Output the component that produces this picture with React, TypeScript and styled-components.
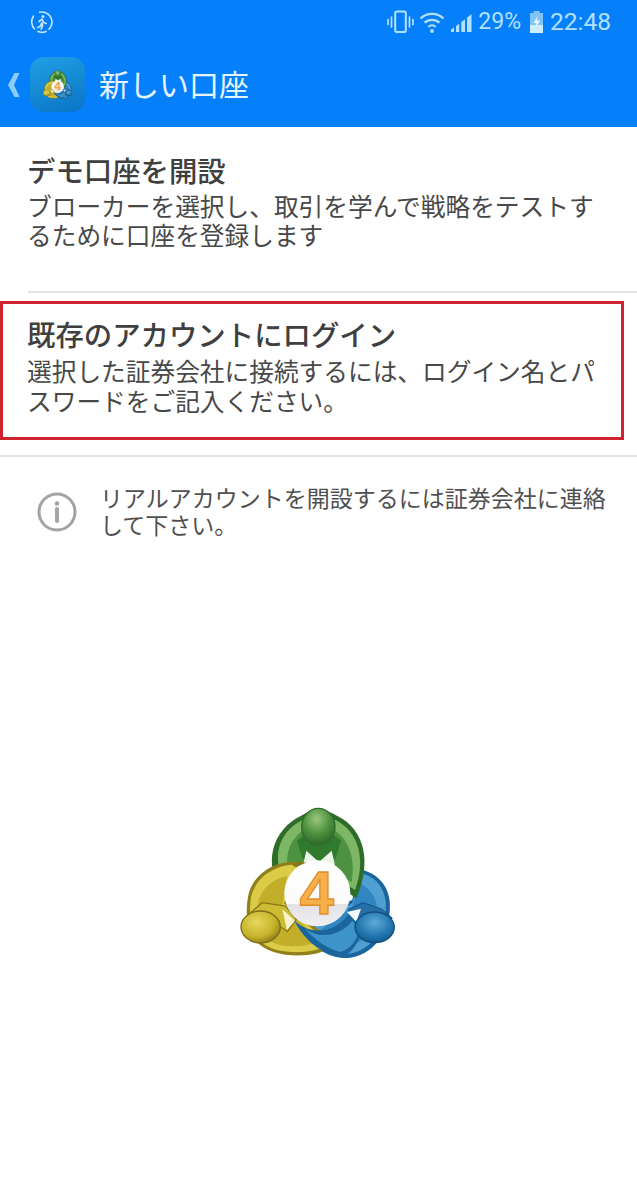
import React from "react";
import styled, { createGlobalStyle } from "styled-components";

const Global = createGlobalStyle`
  html, body { margin: 0; padding: 0; background: #fff; }
  body { font-family: "Noto Sans CJK JP", "Noto Sans", sans-serif; }
`;

const Page = styled.div`
  width: 637px;
  height: 1200px;
  overflow: hidden;
  background: #fff;
  display: flex;
  flex-direction: column;
`;

const Header = styled.header`
  background: #067ffb;
  height: 127px;
  display: flex;
  flex-direction: column;
`;

const StatusBar = styled.div`
  height: 44px;
  display: flex;
  align-items: center;
  padding: 0 26px 0 30px;
  color: #b4e1ff;
  font-family: Roboto, "Liberation Sans", sans-serif;
`;

const StatusLeft = styled.div`
  flex: 1;
  display: flex;
  align-items: center;
`;

const StatusText = styled.span<{ $ml: number; $size: number }>`
  font-size: ${(p) => p.$size}px;
  line-height: 44px;
  margin-left: ${(p) => p.$ml}px;
`;

const IconSlot = styled.svg<{ $ml?: number }>`
  display: block;
  flex: none;
  margin-left: ${(p) => p.$ml ?? 0}px;
`;

const AppBar = styled.div`
  flex: 1;
  display: flex;
  align-items: center;
  padding: 0 0 2px 7px;
`;

const BackChevron = styled.svg`
  display: block;
  flex: none;
`;

const AppIcon = styled.div`
  width: 55px;
  height: 55px;
  margin-left: 10px;
  border-radius: 14px;
  background: linear-gradient(160deg, #20a0e4 0%, #0a74c6 100%);
  display: flex;
  align-items: center;
  justify-content: center;
`;

const AppTitle = styled.h1`
  margin: 0 0 4px 14px;
  font-size: 30px;
  line-height: 40px;
  font-weight: 400;
  color: #e4f5ff;
`;

const Section = styled.section`
  padding: 25px 37px 42px 27px;
`;

const Divider = styled.div<{ $inset: number }>`
  height: 2px;
  margin-left: ${(p) => p.$inset}px;
  background: #e4e4e4;
`;

const Highlight = styled.section`
  margin: 8px 13px 15px 0;
  height: 139px;
  box-sizing: border-box;
  border: 3.5px solid #cf2430;
  padding: 12px 20px 0 24px;
`;

const Title = styled.h2`
  margin: 0 0 3px;
  font-size: 28.4px;
  line-height: 36px;
  font-weight: 500;
  color: #3f3f3f;
`;

const Body = styled.p<{ $lh: number }>`
  margin: 0;
  font-size: 24.7px;
  line-height: ${(p) => p.$lh}px;
  color: #484848;
`;

const InfoRow = styled.div`
  display: flex;
  align-items: flex-start;
  padding: 27px 28px 0 37px;
`;

const InfoIcon = styled.svg`
  flex: none;
  display: block;
  margin: 8px 23px 0 0;
`;

const InfoText = styled.p`
  margin: 0;
  font-size: 23px;
  line-height: 27px;
  color: #505050;
`;

const LogoArea = styled.div`
  display: flex;
  justify-content: center;
  padding: 252px 0 0 0;
`;

function Mark({ size, id }: { size: number; id: string }) {
  return (
    <svg width={size} height={(size * 540) / 600} viewBox="0 0 600 540" style={{ display: "block" }}>
      <defs>
        <radialGradient id={`${id}g`} cx="45%" cy="30%" r="70%">
          <stop offset="0%" stopColor="#9cc77f" />
          <stop offset="55%" stopColor="#4f9340" />
          <stop offset="100%" stopColor="#2c6a29" />
        </radialGradient>
        <radialGradient id={`${id}y`} cx="40%" cy="35%" r="70%">
          <stop offset="0%" stopColor="#e6d85c" />
          <stop offset="65%" stopColor="#c7b32a" />
          <stop offset="100%" stopColor="#8a7a16" />
        </radialGradient>
        <radialGradient id={`${id}b`} cx="50%" cy="35%" r="70%">
          <stop offset="0%" stopColor="#5fa9d6" />
          <stop offset="65%" stopColor="#1f74ad" />
          <stop offset="100%" stopColor="#125286" />
        </radialGradient>
        <linearGradient id={`${id}c`} x1="0" y1="0" x2="0" y2="1">
          <stop offset="0%" stopColor="#ffffff" />
          <stop offset="66%" stopColor="#fcfcfc" />
          <stop offset="67%" stopColor="#e2e2e6" />
          <stop offset="100%" stopColor="#f0f0f2" />
        </linearGradient>
      </defs>

      {/* blue figure: ring behind the others */}
      <path d="M415 238C482 245 520 300 512 365C505 450 440 507 372 504C310 500 255 450 225 390L400 330Z" fill="#1a659e" />
      <path d="M425 250C482 262 506 312 500 365C492 442 434 494 372 492C330 490 290 462 262 425L400 340Z" fill="#4f9fd3" />
      <path d="M420 280C458 296 478 332 474 372C464 432 420 470 372 468C340 466 310 450 290 430L400 350Z" fill="#2f86c0" />

      {/* green figure */}
      <path d="M178 285C138 215 160 120 245 78C280 55 320 55 355 78C440 120 458 220 412 325L330 270L240 240Z" fill="#2e6c2a" />
      <path d="M188 255C160 190 186 122 250 90L350 90C420 126 442 210 408 300L330 250L240 225Z" fill="#7db766" />
      <path d="M208 240C196 190 216 146 252 122L348 122C392 152 410 210 398 276L330 240L240 225Z" fill="#4c9240" />
      <path d="M234 152L262 130L338 130L366 152L350 205L300 232L250 205Z" fill="#2f7a2c" />
      <path d="M262 182L300 216L338 182L348 226L252 226Z" fill="#eef5e8" />
      <ellipse cx="298" cy="110" rx="50" ry="55" fill={`url(#${id}g)`} stroke="#2e6c2a" strokeWidth="4" />

      {/* yellow figure */}
      <path d="M245 216C170 208 100 250 87 320C78 372 84 420 110 452C140 486 190 498 250 496C292 494 322 484 348 462L300 420L205 345Z" fill="#8f801a" />
      <path d="M240 224C176 220 110 258 96 322C88 372 96 424 124 454C156 484 205 488 250 486C285 484 312 476 334 460L290 425L195 340Z" fill="#dccb46" />
      <path d="M205 258C158 268 124 298 116 345C110 392 126 434 158 456C195 474 250 472 300 456L270 420L190 345Z" fill="#c2ae28" />
      <path d="M98 365L130 338L200 348L232 388L205 425L150 385Z" fill="#cdbb33" stroke="#86771a" strokeWidth="4" />
      <path d="M190 358L228 392L204 420Z" fill="#f7f3cf" />
      <ellipse cx="125" cy="411" rx="59" ry="48" fill={`url(#${id}y)`} stroke="#7c6e18" strokeWidth="4" />

      {/* blue figure: swoosh in front of yellow, jacket and head */}
      <path d="M225 390C268 436 350 436 396 362L432 405C424 458 396 492 368 502C308 494 255 450 225 390Z" fill="#1a659e" />
      <path d="M258 416C300 446 360 442 400 392L422 420C412 454 392 478 365 486C328 478 288 450 258 416Z" fill="#3f93cb" />
      <path d="M388 358L432 338L490 358L520 385L430 418Z" fill="#246fa8" stroke="#125286" strokeWidth="3" />
      <path d="M384 366L426 356L412 396Z" fill="#f4f9fc" />
      <ellipse cx="467" cy="412" rx="59" ry="46" fill={`url(#${id}b)`} stroke="#114f80" strokeWidth="4" />

      {/* centre */}
      <circle cx="295" cy="310" r="99" fill={`url(#${id}c)`} />
      <path d="M232 232C210 222 215 220 245 216L262 218C250 222 240 226 232 232Z" fill="#86771a" />
      <text
        x="293"
        y="371"
        textAnchor="middle"
        fontFamily="'Liberation Sans', sans-serif"
        fontSize="186"
        fontWeight="700"
        fill="#f6b04a"
        stroke="#e28c2c"
        strokeWidth="4"
      >
        4
      </text>
    </svg>
  );
}

export default function App() {
  return (
    <Page>
      <Global />
      <Header>
        <StatusBar>
          <StatusLeft>
            <IconSlot width="24" height="24" viewBox="0 0 24 24" fill="none" stroke="#c4e8ff">
              <path d="M9.5 2.200A10.300 10.300 0 0 1 22 12a10.300 10.300 0 0 1-3 7.300M16 21.400a10.300 10.300 0 0 1-8 .2M4.600 19A10.300 10.300 0 0 1 3.400 6.200" strokeWidth="1.600" strokeLinecap="round" />
              <circle cx="13" cy="6.400" r="1.500" fill="#c4e8ff" stroke="none" />
              <path d="M9 11.500l3-2.400 1.600 3.400 2.600 1M11.800 13l.8 2.200-1.400 3.800M11.400 13.600l-1 2.400-2.600 1.600" strokeWidth="1.700" strokeLinecap="round" strokeLinejoin="round" />
            </IconSlot>
          </StatusLeft>
          <IconSlot width="27" height="24" viewBox="0 0 27 24" fill="none" stroke="#b4e1ff" strokeWidth="1.700">
            <rect x="8.200" y="1.500" width="10.600" height="20.500" rx="1.800" strokeWidth="2" />
            <path d="M4.500 7v10M1 9.500v5M22.500 7v10M26 9.500v5" strokeLinecap="round" />
          </IconSlot>
          <IconSlot $ml={5} width="26" height="24" viewBox="0 0 26 24" fill="none" stroke="#b4e1ff" strokeWidth="2.200">
            <path d="M1.500 8.500a16.500 16.500 0 0 1 23 0M5.500 12.800a11 11 0 0 1 15 0M9.300 16.800a5.600 5.600 0 0 1 7.400 0" />
            <circle cx="13" cy="21" r="1.900" fill="#b4e1ff" stroke="none" />
          </IconSlot>
          <IconSlot $ml={5} width="23" height="24" viewBox="0 0 23 24" fill="#b4e1ff">
            <path d="M1 22v-2.500l3-2V22zM6 22v-6l3.200-2.300V22zM11.300 22V12l3.700-2.700V22zM17 22V7.800L21.500 4v18z" />
          </IconSlot>
          <StatusText $ml={5} $size={23}>29%</StatusText>
          <IconSlot $ml={8} width="15" height="24" viewBox="0 0 15 24">
            <path d="M4.500 1h6v2h3.500v20H1V3h3.500z" fill="#7fc4f5" />
            <path d="M1 15h13v8H1z" fill="#cdeeff" />
            <path d="M8.500 6L4.500 13h3l-1 5 4.500-7.500H7.800z" fill="#eaf8ff" />
          </IconSlot>
          <StatusText $ml={6} $size={24.500}>22:48</StatusText>
        </StatusBar>
        <AppBar>
          <BackChevron width="13" height="26" viewBox="0 0 13 26">
            <path d="M7.500 1h5L7 13l5.500 12h-5L1 13z" fill="#8ccdfb" />
          </BackChevron>
          <AppIcon>
            <Mark size={38} id="s" />
          </AppIcon>
          <AppTitle>新しい口座</AppTitle>
        </AppBar>
      </Header>

      <Section>
        <Title>デモ口座を開設</Title>
        <Body $lh={29}>ブローカーを選択し、取引を学んで戦略をテストするために口座を登録します</Body>
      </Section>
      <Divider $inset={28} />
      <Highlight>
        <Title>既存のアカウントにログイン</Title>
        <Body $lh={30}>選択した証券会社に接続するには、ログイン名とパスワードをご記入ください。</Body>
      </Highlight>
      <Divider $inset={0} />
      <InfoRow>
        <InfoIcon width="40" height="40" viewBox="0 0 40 40" fill="none">
          <circle cx="20" cy="20" r="18" stroke="#a3a3a3" strokeWidth="3" />
          <circle cx="20" cy="11.500" r="2.300" fill="#a3a3a3" />
          <path d="M20 17v12" stroke="#a3a3a3" strokeWidth="4" strokeLinecap="round" />
        </InfoIcon>
        <InfoText>リアルアカウントを開設するには証券会社に連絡して下さい。</InfoText>
      </InfoRow>
      <LogoArea>
        <Mark size={200} id="l" />
      </LogoArea>
    </Page>
  );
}
